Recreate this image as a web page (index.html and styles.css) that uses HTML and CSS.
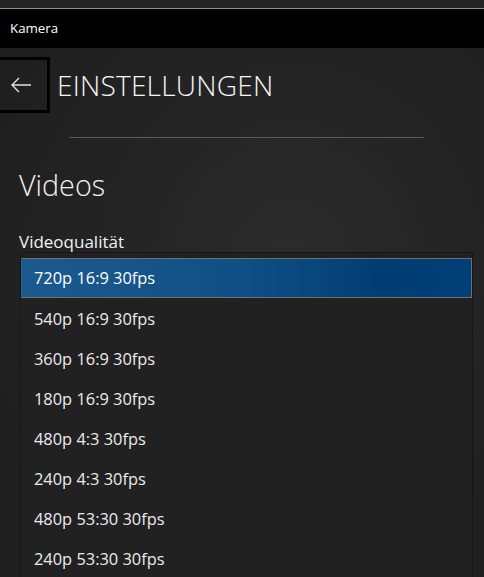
FILE: index.html
```html
<!DOCTYPE html>
<html lang="de">
<head>
<meta charset="utf-8">
<title>Kamera</title>
<link rel="stylesheet" href="styles.css">
</head>
<body>
<div class="topstrip"></div>
<div class="titlebar">Kamera</div>
<div class="header">
  <div class="back">
    <svg width="22" height="16" viewBox="0 0 22 16"><path d="M21 8H2M9 1L2 8l7 7" fill="none" stroke="#e0e0e0" stroke-width="1.4"/></svg>
  </div>
  <h1 class="title">EINSTELLUNGEN</h1>
</div>
<div class="divider"></div>
<h2 class="section">Videos</h2>
<div class="label">Videoqualität</div>
<ul class="dropdown">
  <li class="item selected">720p 16:9 30fps</li>
  <li class="item">540p 16:9 30fps</li>
  <li class="item">360p 16:9 30fps</li>
  <li class="item">180p 16:9 30fps</li>
  <li class="item">480p 4:3 30fps</li>
  <li class="item">240p 4:3 30fps</li>
  <li class="item">480p 53:30 30fps</li>
  <li class="item">240p 53:30 30fps</li>
</ul>
</body>
</html>
```
FILE: styles.css
```css
html, body {
  margin: 0;
  padding: 0;
  height: 100%;
  overflow: hidden;
}
body {
  background: radial-gradient(ellipse 70% 60% at 60% 45%, #2b2b2b 0%, #232323 60%, #1f1f1f 100%);
  color: #f2f2f2;
  font-family: "Open Sans", "Noto Sans", sans-serif;
}
.topstrip {
  height: 8px;
  background: #242424;
  border-bottom: 1px solid #8e8e8e;
}
.titlebar {
  height: 39px;
  background: #000;
  color: #fff;
  font-size: 13.3px;
  line-height: 39px;
  padding-left: 10px;
}
.header {
  display: flex;
  align-items: center;
  margin-top: 9px;
  height: 55px;
}
.back {
  box-sizing: border-box;
  width: 50px;
  height: 56px;
  border: 3px solid #000;
  border-left: none;
  display: flex;
  align-items: center;
  justify-content: center;
  padding-right: 6px;
}
.title {
  margin: 0 0 0 7px;
  font-size: 28.1px;
  font-weight: 300;
  letter-spacing: 0.2px;
  color: #f5f5f5;
}
.divider {
  margin: 25px 0 0 69px;
  width: 355px;
  height: 1px;
  background: #595959;
}
.section {
  margin: 27px 0 0 19px;
  font-size: 28.7px;
  font-weight: 300;
  line-height: 40px;
}
.label {
  margin: 27px 0 0 19px;
  font-size: 17px;
  line-height: 20px;
}
.dropdown {
  list-style: none;
  margin: 0 0 0 20px;
  padding: 5px 0 0;
  width: 453px;
  box-sizing: border-box;
  background: #212121;
  border: 1px solid #161616;
  border-bottom: none;
}
.item {
  height: 40px;
  line-height: 40px;
  padding-left: 13px;
  font-size: 16.4px;
  color: #ececec;
}
.item.selected {
  height: 38px;
  line-height: 38px;
  margin-bottom: 1px;
  border: 1px solid #707070;
  border-left-color: #2a5f8e;
  padding-left: 12px;
  background: linear-gradient(90deg, #1b5a8e 0%, #0f4f85 50%, #003d73 80%, #004078 100%);
  color: #fff;
}
```
